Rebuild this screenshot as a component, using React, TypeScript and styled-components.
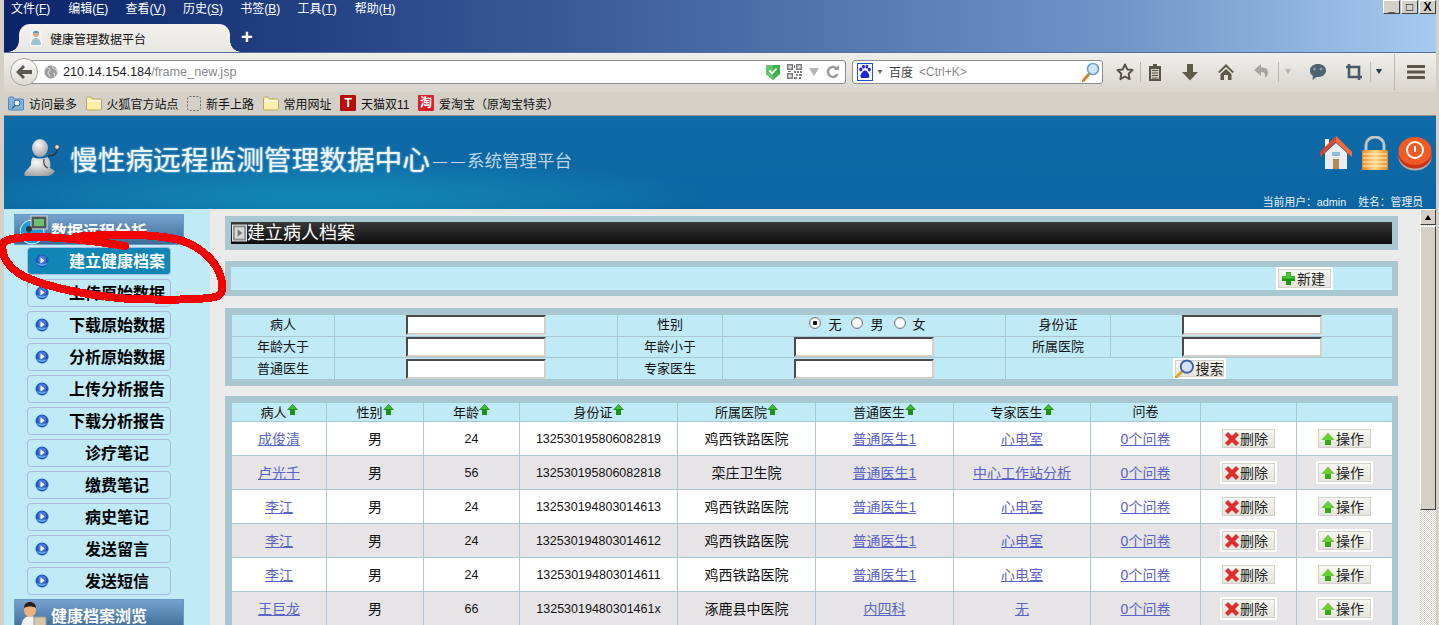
import React from "react";
import styled, { createGlobalStyle } from "styled-components";

const FONT = `"Liberation Sans", "Noto Sans CJK SC", sans-serif`;

const Global = createGlobalStyle`
  html, body { margin: 0; padding: 0; background: #d4d0c8; }
  * { box-sizing: border-box; }
  body { font-family: ${FONT}; }
`;

const Page = styled.div`
  position: relative;
  width: 1439px;
  height: 625px;
  overflow: hidden;
  background: #d4d0c8;
  padding: 0 3px 0 4px;
  display: flex;
  flex-direction: column;
  font-family: ${FONT};
`;

/* ---------- browser chrome ---------- */
const TitleBar = styled.div`
  height: 52px;
  flex: none;
  background: linear-gradient(90deg, #0a246a 0%, #3a5b98 40%, #7096c8 78%, #a6caf0 100%);
  display: flex;
  flex-direction: column;
`;
const MenuRow = styled.div`
  height: 24px;
  display: flex;
  padding-left: 7px;
`;
const MenuItem = styled.span`
  flex: 0 0 57.3px;
  color: #fff;
  font-size: 12px;
  line-height: 18px;
  u { text-underline-offset: 1px; }
`;
const WinButtons = styled.div`
  margin-left: auto;
  display: flex;
  gap: 1px;
  height: 14px;
`;
const WinButton = styled.span`
  width: 17px;
  height: 14px;
  background: #d4d0c8;
  border: 1px solid;
  border-color: #fff #404040 #404040 #fff;
  color: #000;
  font-size: 12px;
  font-weight: bold;
  line-height: 12px;
  text-align: center;
`;
const TabRow = styled.div`
  height: 28px;
  display: flex;
  align-items: stretch;
  padding-left: 15px;
`;
const Tab = styled.div`
  position: relative;
  width: 211px;
  background: linear-gradient(#f3f2ee, #e8e6e1);
  border-radius: 11px 11px 0 0;
  display: flex;
  align-items: center;
  padding-left: 11px;
  gap: 8px;
  font-size: 12px;
  color: #111;
  &::before, &::after {
    content: "";
    position: absolute;
    bottom: 0;
    width: 11px;
    height: 11px;
  }
  &::before {
    left: -11px;
    background: radial-gradient(circle at 0 0, transparent 10.5px, #e8e6e1 11px);
  }
  &::after {
    right: -11px;
    background: radial-gradient(circle at 100% 0, transparent 10.5px, #e8e6e1 11px);
  }
`;
const NewTab = styled.span`
  margin-left: 11px;
  color: #fff;
  font-size: 20px;
  font-weight: bold;
  line-height: 26px;
`;
const NavBar = styled.div`
  height: 40px;
  flex: none;
  border-top: 1px solid #5a6f96;
  background: linear-gradient(#f0efeb, #d8d5ce);
  display: flex;
  align-items: center;
  padding: 0 0 2px 6px;
`;
const BackButton = styled.div`
  width: 28px;
  height: 28px;
  flex: none;
  border-radius: 50%;
  border: 1px solid #a8a49c;
  background: linear-gradient(#fbfbf9, #dcdad4);
  display: flex;
  align-items: center;
  justify-content: center;
  position: relative;
  z-index: 1;
`;
const UrlBar = styled.div`
  width: 822px;
  height: 24px;
  margin-left: -14px;
  background: #fff;
  border: 1px solid #8e8e8e;
  border-radius: 0 3px 3px 0;
  display: flex;
  align-items: center;
  padding: 0 6px 0 19px;
  font-size: 12.7px;
  color: #222;
`;
const UrlText = styled.span`
  margin-left: 5px;
  span { color: #8a8a8a; }
`;
const UrlIcons = styled.div`
  margin-left: auto;
  display: flex;
  align-items: center;
  gap: 7px;
`;
const SearchBar = styled.div`
  width: 251px;
  height: 24px;
  margin-left: 6px;
  background: #fff;
  border: 1px solid #8e8e8e;
  border-radius: 3px;
  display: flex;
  align-items: center;
  padding: 0 2px 0 4px;
  font-size: 12px;
  color: #555;
`;
const SearchHint = styled.span`
  margin-left: 6px;
  display: flex;
  align-items: center;
  gap: 6px;
  color: #444;
  span { color: #888; }
`;
const SearchGlass = styled.span`
  margin-left: auto;
  display: flex;
`;
const ToolSlot = styled.span<{ $ml: number }>`
  margin-left: ${(p) => p.$ml}px;
  display: flex;
  align-items: center;
`;
const ToolSep = styled.span<{ $ml: number; $h: number }>`
  margin-left: ${(p) => p.$ml}px;
  width: 1px;
  height: ${(p) => p.$h}px;
  background: #bcb8b0;
`;
const BookmarkBar = styled.div`
  height: 24px;
  flex: none;
  display: flex;
  align-items: center;
  gap: 8.5px;
  padding: 0 0 1px 4px;
  border-bottom: 1px solid #8f8c86;
  background: #d4d0c8;
`;
const Bookmark = styled.span`
  display: flex;
  align-items: center;
  gap: 5px;
  font-size: 12px;
  color: #111;
`;
const BookBadge = styled.span<{ $bg: string }>`
  width: 16px;
  height: 16px;
  background: ${(p) => p.$bg};
  color: #fff;
  font-size: 12px;
  font-weight: bold;
  line-height: 16px;
  text-align: center;
  border-radius: 1px;
`;

/* ---------- site header ---------- */
const SiteHeader = styled.header`
  height: 93px;
  flex: none;
  display: flex;
  justify-content: space-between;
  background:
    radial-gradient(ellipse 390px 38px at 320px 80px, #1288b6 0%, rgba(18, 136, 182, 0.5) 60%, rgba(18, 136, 182, 0) 100%),
    linear-gradient(#0f6ca8, #0c65a2);
`;
const Brand = styled.div`
  display: flex;
  align-items: center;
  padding: 0 0 10px 20px;
`;
const BrandTitle = styled.h1`
  margin: 0 0 0 10px;
  font-size: 27.7px;
  font-weight: 400;
  color: #eef6fb;
  text-shadow: 0 0 2px #bfe2f2;
  white-space: nowrap;
`;
const BrandDash = styled.span`
  margin: 6px -2px 0 3px;
  font-size: 14px;
  letter-spacing: 4px;
  color: #bcd6e6;
  white-space: nowrap;
`;
const BrandSub = styled.span`
  font-size: 17.5px;
  color: #bcd6e6;
  margin-top: 4px;
  white-space: nowrap;
`;
const HeaderRight = styled.div`
  display: flex;
  flex-direction: column;
  align-items: flex-end;
  padding: 19px 4px 0 0;
`;
const HeaderIcons = styled.div`
  display: flex;
  align-items: center;
  gap: 9px;
`;
const UserLine = styled.div`
  margin-top: auto;
  margin-right: 9px;
  font-size: 10.8px;
  color: #e6f2fa;
  display: flex;
  gap: 12px;
`;

/* ---------- body ---------- */
const Body = styled.div`
  flex: 1;
  min-height: 0;
  display: flex;
`;
const Sidebar = styled.nav`
  width: 206px;
  flex: none;
  background: #c0eaf5;
  padding: 5px 0 0 10px;
  display: flex;
  flex-direction: column;
`;
const SectionHead = styled.div`
  width: 170px;
  height: 31px;
  flex: none;
  margin-bottom: 2px;
  border: 1px solid #6a98c8;
  background: linear-gradient(#76a2cf, #3d6b94);
  display: flex;
  align-items: center;
  padding-left: 5px;
  gap: 3px;
  color: #fff;
  font-size: 16px;
  font-weight: bold;
`;
const SideButton = styled.div<{ $active?: boolean }>`
  width: 144px;
  height: 28px;
  flex: none;
  margin: 0 0 4px 13px;
  border: 1px solid #aabbdd;
  border-radius: 4px;
  background: ${(p) => (p.$active ? "#0f86b5" : "#c0eaf5")};
  color: ${(p) => (p.$active ? "#fff" : "#000")};
  display: grid;
  grid-template-columns: 36px 1fr;
  align-items: center;
  font-size: 16px;
  line-height: 24px;
  font-weight: bold;
  text-align: center;
  svg { margin-left: 7px; }
  span { padding-top: 1px; }
`;
const Main = styled.main`
  flex: 1;
  min-width: 0;
  overflow: hidden;
  background: #ebebeb;
  padding: 7px 22px 0 15px;
  display: flex;
  flex-direction: column;
`;
const Panel = styled.section<{ $gap?: number }>`
  flex: none;
  background: #a9c7d0;
  padding: 6px;
  margin-bottom: ${(p) => p.$gap ?? 0}px;
`;
const PageTitle = styled.div`
  height: 22px;
  background: linear-gradient(#383838, #0e0e0e);
  color: #fff;
  display: flex;
  align-items: center;
  padding-left: 1px;
  font-size: 18px;
  line-height: 22px;
`;
const ToolRow = styled.div`
  height: 23px;
  background: #c0eaf5;
  display: flex;
  justify-content: flex-end;
  padding-right: 59px;
`;
const ActionButton = styled.button<{ $h?: number }>`
  font-family: ${FONT};
  height: ${(p) => p.$h ?? 23}px;
  width: ${(p) => (p.$h ? 53 : 57)}px;
  padding: 0 0 0 ${(p) => (p.$h ? 0 : 3)}px;
  display: inline-flex;
  align-items: center;
  vertical-align: middle;
  gap: 1px;
  background: linear-gradient(#f8f8f3, #e4e4dc);
  border: 2px solid #fff;
  box-shadow: inset 0 0 0 1px #d2d2ca;
  color: #222;
  font-size: 14px;
  line-height: 16px;
`;
const Grid = styled.table`
  width: 1161px;
  table-layout: fixed;
  border-collapse: collapse;
  font-size: 14px;
  color: #111;
`;
const ColW = styled.col<{ $w: number }>`
  width: ${(p) => p.$w}px;
`;
const FilterCell = styled.td`
  height: 21.6px;
  padding: 0;
  border: 1px solid #a9c7d0;
  background: #c0eaf5;
  font-size: 13px;
  line-height: 16px;
  text-align: center;
`;
const TextField = styled.input`
  display: block;
  width: 140px;
  height: 20px;
  margin: 0 auto;
  padding: 0;
  background: #fff;
  border: 2px solid;
  border-color: #4a4a4a #d4d0c8 #d4d0c8 #4a4a4a;
`;
const ButtonCell = styled.div`
  display: flex;
  justify-content: center;
`;
const RadioGroup = styled.div`
  display: flex;
  justify-content: center;
  align-items: center;
  padding-left: 17px;
`;
const RadioLabel = styled.label`
  display: flex;
  align-items: center;
  gap: 7px;
  margin-right: 10px;
  font-size: 13px;
`;
const Radio = styled.input`
  appearance: none;
  width: 12px;
  height: 12px;
  margin: 0 0 4px;
  border-radius: 50%;
  background: #fff;
  border: 1px solid #777;
  box-shadow: inset 0 0 0 1px #ddd;
  &:checked { background: radial-gradient(circle, #111 0 2px, #fff 2.5px); }
`;
const HeadCell = styled.th`
  height: 19px;
  padding: 0;
  border: 1px solid #a9c7d0;
  background: #c0eaf5;
  font-size: 13px;
  line-height: 14px;
  font-weight: 400;
  white-space: nowrap;
  svg { vertical-align: 2px; }
`;
const Row = styled.tr<{ $alt: boolean }>`
  background: ${(p) => (p.$alt ? "#e6e4e6" : "#fff")};
`;
const Cell = styled.td<{ $small?: boolean }>`
  height: 34px;
  padding: 0;
  border: 1px solid #a9c7d0;
  text-align: center;
  font-size: ${(p) => (p.$small ? "12.5px" : "14px")};
  line-height: 20px;
  white-space: nowrap;
`;
const TableLink = styled.a`
  color: #5b63c4;
  text-decoration: underline;
`;
const Scrollbar = styled.div`
  width: 16px;
  flex: none;
  display: flex;
  flex-direction: column;
  background: repeating-conic-gradient(#d4d0c8 0 25%, #fff 0 50%) 0 0 / 2px 2px;
`;
const ScrollUp = styled.div`
  height: 16px;
  flex: none;
  background: #d4d0c8;
  border: 1px solid;
  border-color: #fff #404040 #404040 #fff;
  display: flex;
  align-items: center;
  justify-content: center;
`;
const ScrollThumb = styled.div`
  height: 284px;
  margin-top: 1px;
  flex: none;
  background: #d4d0c8;
  border: 1px solid;
  border-color: #fff #404040 #404040 #fff;
`;
const Scribble = styled.svg`
  position: absolute;
  left: 0;
  top: 225px;
  pointer-events: none;
`;

/* ---------- drawings ---------- */
const Globe = () => (
  <svg width="14" height="14" viewBox="0 0 14 14">
    <circle cx="7" cy="7" r="6.5" fill="#9c9c9c" />
    <path d="M3 3c2 0 3 1 3 2s-2 1-2 3 2 1 2 4M9 1c-1 2 0 3 2 3s1 2 2 3M9 8c2 0 2 2 1 4" stroke="#d6d6d6" fill="none" strokeWidth="1.2" />
  </svg>
);
const Shield = () => (
  <svg width="14" height="16" viewBox="0 0 14 16">
    <path d="M0 1h14v9l-7 6-7-6z" fill="#3fb24c" />
    <path d="M0 1h7v15l-7-6z" fill="#62c46a" />
    <path d="M3.5 6.5l2.5 3 4.5-5" stroke="#fff" strokeWidth="1.8" fill="none" />
  </svg>
);
const Qr = () => (
  <svg width="15" height="15" viewBox="0 0 15 15" fill="#7b7b7b">
    <path fillRule="evenodd" d="M0 0h6v6H0zM1.5 1.5v3h3v-3zM9 0h6v6H9zM10.500 1.500v3h3v-3zM0 9h6v6H0zM1.500 10.500v3h3v-3z" />
    <path d="M2.500 2.500h1v1h-1zM11.500 2.500h1v1h-1zM2.500 11.500h1v1h-1zM7 1h1v3H7zM7 7h2v2H7zM10 7h2v2h-2zM13 7h2v2h-2zM1 7h3v1H1zM9 10h2v2H9zM12 10h3v2h-3zM7 13h3v2H7zM12 13h2v2h-2z" />
  </svg>
);
const Tri = ({ w = 10, h = 8, c = "#b4b4b4", down = true }: { w?: number; h?: number; c?: string; down?: boolean }) => (
  <svg width={w} height={h} viewBox="0 0 10 8">
    <path d={down ? "M0 0h10L5 8z" : "M0 8h10L5 0z"} fill={c} />
  </svg>
);
const Reload = () => (
  <svg width="13" height="15" viewBox="0 0 13 15">
    <path d="M11 5A5 5 0 1 0 11.500 10" fill="none" stroke="#9a9a9a" strokeWidth="2.400" />
    <path d="M8 6h5V1z" fill="#9a9a9a" />
  </svg>
);
const BaiduIcon = () => (
  <svg width="16" height="18" viewBox="0 0 16 18">
    <rect x=".5" y=".5" width="15" height="17" fill="#fff" stroke="#1a56c4" />
    <g fill="#2222dd">
      <ellipse cx="3.800" cy="6.500" rx="1.500" ry="2" />
      <ellipse cx="6.500" cy="3.800" rx="1.400" ry="2" />
      <ellipse cx="9.800" cy="3.800" rx="1.400" ry="2" />
      <ellipse cx="12.300" cy="6.500" rx="1.500" ry="2" />
      <path d="M8 7.500c2 0 2.500 2 3.800 3.500 1.300 2 .5 4-1.500 4H5.500c-2 0-2.800-2-1.500-4C5.300 9.500 6 7.500 8 7.500z" />
    </g>
  </svg>
);
const Glass = () => (
  <svg width="18" height="20" viewBox="0 0 18 20">
    <path d="M1 19l6-7" stroke="#c98a3a" strokeWidth="3" strokeLinecap="round" />
    <circle cx="11" cy="7" r="5.500" fill="#cfe8f8" stroke="#6f9ec6" strokeWidth="1.600" />
  </svg>
);
const Star = () => (
  <svg width="18" height="18" viewBox="0 0 18 18">
    <path d="M9 1.500l2.300 4.900 5.200.7-3.800 3.700.9 5.300L9 13.500l-4.600 2.600.9-5.300L1.500 7.100l5.200-.7z" fill="none" stroke="#57524a" strokeWidth="2" strokeLinejoin="round" />
  </svg>
);
const Clip = () => (
  <svg width="18" height="18" viewBox="0 0 18 18">
    <path d="M3 3h4V1h4v2h4v15H3z" fill="#59554a" />
    <path d="M5 6h8v10H5z" fill="#cfccc4" />
    <path d="M6 7.500h6M6 10h6M6 12.500h6M6 15h6" stroke="#59554a" strokeWidth="1.200" />
  </svg>
);
const Down = () => (
  <svg width="18" height="18" viewBox="0 0 18 18">
    <path d="M6 1h6v8h5l-8 8.500L1 9h5z" fill="#5d5a4c" />
  </svg>
);
const HomeTool = () => (
  <svg width="18" height="18" viewBox="0 0 18 18">
    <path d="M9 1L1 9l1.500 1L9 4l6.500 6L17 9z" fill="#5d5a4c" />
    <path d="M3.500 11L9 6l5.500 5v6H11v-5H7v5H3.500z" fill="#5d5a4c" />
  </svg>
);
const Undo = () => (
  <svg width="18" height="18" viewBox="0 0 18 18">
    <path d="M8 1L1 7l7 6V9c3 0 4.500 1.500 4 6 3-2.500 4-5.500 2.500-8C13.500 5 11 4.500 8 4.500z" fill="#a8a6a0" />
  </svg>
);
const Chat = () => (
  <svg width="18" height="18" viewBox="0 0 18 18">
    <path d="M9 1c4.500 0 8 2.500 8 6.500S13.500 14 9 14c-.7 0-1 0-1.500-.1L3.500 17l.5-4C2 12 1 10 1 7.500 1 3.500 4.500 1 9 1z" fill="#4e6272" />
    <circle cx="5.500" cy="6" r="1.500" fill="#8b9aa6" />
    <circle cx="12" cy="6" r="1.500" fill="#8b9aa6" />
  </svg>
);
const Crop = () => (
  <svg width="18" height="18" viewBox="0 0 18 18">
    <path d="M4 1v13h13M1 4h13v13" fill="none" stroke="#4a5a68" strokeWidth="2.600" />
  </svg>
);
const Burger = () => (
  <svg width="18" height="14" viewBox="0 0 18 14">
    <path d="M1 0h16a1 1 0 0 1 0 3H1a1 1 0 0 1 0-3zM1 5.500h16a1 1 0 0 1 0 3H1a1 1 0 0 1 0-3zM1 11h16a1 1 0 0 1 0 3H1a1 1 0 0 1 0-3z" fill="#59554a" />
  </svg>
);
const Favicon = () => (
  <svg width="12" height="16" viewBox="0 0 12 16">
    <rect width="12" height="16" fill="#f4f4f4" />
    <circle cx="6" cy="4" r="3" fill="#d9a98c" />
    <path d="M3 3c0-3 6-3 6 0z" fill="#5a9ab8" />
    <path d="M1 15c0-5 3-7 5-7s5 2 5 7z" fill="#9cc4d8" />
  </svg>
);
const FolderIcon = () => (
  <svg width="16" height="15" viewBox="0 0 16 15">
    <path d="M.5 2.500c0-1 .5-1.500 1.500-1.500h3l1.500 2h8c.6 0 1 .4 1 1v9c0 .6-.4 1-1 1h-13c-.6 0-1-.4-1-1z" fill="#fbeea6" stroke="#b9a560" />
    <path d="M1 5h14" stroke="#fff" />
  </svg>
);
const MostIcon = () => (
  <svg width="16" height="15" viewBox="0 0 16 15">
    <path d="M.5 2.500c0-1 .5-1.500 1.500-1.500h3l1.500 2h8c.6 0 1 .4 1 1v9c0 .6-.4 1-1 1h-13c-.6 0-1-.4-1-1z" fill="#7fb3dc" stroke="#4f86b6" />
    <circle cx="9" cy="7" r="3" fill="#e4f2fb" stroke="#2f6a9c" />
    <path d="M7 9.500l-3 3" stroke="#2f6a9c" strokeWidth="1.600" />
  </svg>
);
const DashedIcon = () => (
  <svg width="14" height="15" viewBox="0 0 14 15">
    <rect x=".5" y=".5" width="13" height="14" rx="2" fill="none" stroke="#6a6a64" strokeDasharray="2 1.500" />
  </svg>
);
const PersonLogo = () => (
  <svg width="36" height="40" viewBox="0 0 36 40">
    <defs>
      <radialGradient id="pg" cx="40%" cy="30%" r="80%">
        <stop offset="0" stopColor="#fafafa" />
        <stop offset="1" stopColor="#9a9a9a" />
      </radialGradient>
    </defs>
    <ellipse cx="16" cy="10" rx="8" ry="9" fill="url(#pg)" />
    <path d="M9 19c4 2 10 2 14 0 3 2 4 6 3 11l5 3c-2 3-5 5-8 5H2c-2 0-2-2-1-4 2-3 5-5 6-7 0-3 0-6 2-8z" fill="url(#pg)" />
    <path d="M24 18c6 0 9-3 9-7" stroke="#333" strokeWidth="1.500" fill="none" />
    <circle cx="33" cy="9" r="2.400" fill="#ddd" stroke="#444" />
    <path d="M20 21c-1 5 1 8 4 9" stroke="#444" strokeWidth="1.200" fill="none" />
  </svg>
);
const HomeBig = () => (
  <svg width="32" height="36" viewBox="0 0 32 36">
    <path d="M5 18L16 8l11 10v16H5z" fill="#eceff1" />
    <path d="M5 4h4v9H5z" fill="#f1f1f1" />
    <path d="M16 1L0 17v5L16 7l16 15v-5z" fill="#d9482a" />
    <path d="M16 1l16 16v5L16 7z" fill="#f06a3a" />
    <path d="M12 17h8v4h-8z" fill="#8ebde0" />
    <path d="M13 24h6v10h-6z" fill="#b08a5c" />
  </svg>
);
const LockBig = () => (
  <svg width="28" height="35" viewBox="0 0 28 35">
    <defs>
      <linearGradient id="lk" x1="0" x2="1">
        <stop offset="0" stopColor="#e88a28" />
        <stop offset=".5" stopColor="#ffd887" />
        <stop offset="1" stopColor="#e88a28" />
      </linearGradient>
    </defs>
    <path d="M5 15V9a9 8 0 0 1 18 0v6" fill="none" stroke="#bfc4c6" strokeWidth="3" />
    <rect x="1" y="14" width="26" height="20" rx="1.500" fill="url(#lk)" />
    <path d="M2 18h24M2 22h24M2 26h24M2 30h24" stroke="#fff0c8" strokeWidth="1.200" />
  </svg>
);
const PowerBig = () => (
  <svg width="34" height="35" viewBox="0 0 34 35">
    <ellipse cx="17" cy="21" rx="16.500" ry="13.500" fill="#b9aaa4" />
    <ellipse cx="17" cy="19" rx="16.500" ry="13.500" fill="#c8341a" />
    <ellipse cx="17" cy="15" rx="16.500" ry="14" fill="#f25a22" />
    <circle cx="17" cy="14" r="8" fill="none" stroke="#fff" strokeWidth="2" />
    <path d="M17 10v6" stroke="#fff" strokeWidth="2" />
  </svg>
);
const PlayDot = () => (
  <svg width="14" height="14" viewBox="0 0 14 14">
    <circle cx="7" cy="7" r="6.500" fill="#2154b8" />
    <path d="M1 9c2 4 10 4 12 0-2 1-10 1-12 0z" fill="#5ea2ec" />
    <circle cx="7" cy="5.500" r="4" fill="#4a7ad0" />
    <path d="M5.500 3.500l4 3-4 3z" fill="#fff" />
  </svg>
);
const SectionIconA = () => (
  <svg width="28" height="30" viewBox="0 0 28 30">
    <circle cx="12" cy="17" r="12" fill="#1f9ad8" stroke="#e6f6fc" />
    <path d="M3 18c5 6 14 6 18 0" stroke="#8fdcf5" strokeWidth="2" fill="none" />
    <rect x="11" y="1" width="16" height="13" fill="#50585c" stroke="#d8dcdc" />
    <path d="M14 4h10v7H14z" fill="#6ec070" />
    <circle cx="9" cy="14" r="3" fill="#333" />
    <path d="M9 17v6h8" stroke="#333" strokeWidth="1.600" fill="none" />
  </svg>
);
const SectionIconB = () => (
  <svg width="28" height="28" viewBox="0 0 28 28" style={{ alignSelf: "flex-end" }}>
    <path d="M1 28c0-9 4-13 9-13s9 4 9 13z" fill="#f2f2f2" />
    <ellipse cx="10" cy="9" rx="6" ry="7" fill="#f0b080" />
    <path d="M4 7c0-8 12-8 12 0-3-2-9-2-12 0z" fill="#2a2020" />
    <rect x="14" y="16" width="12" height="12" fill="#d8c8a8" stroke="#999" />
  </svg>
);
const SmallTitleIcon = () => (
  <svg width="15" height="18" viewBox="0 0 16 18">
    <rect x=".5" y=".5" width="15" height="17" fill="#8f8f8f" stroke="#ececec" />
    <rect x="3" y="3" width="10" height="12" fill="#d8d8d8" />
    <path d="M6 5l5 4-5 4z" fill="#777" />
  </svg>
);
const Plus = () => (
  <svg width="15" height="15" viewBox="0 0 15 15">
    <path d="M5 1h5v4h4v5h-4v4H5v-4H1V5h4z" fill="#1d9a12" />
    <path d="M5.500 1.500h4v4h-4z M1.500 5.500h12v2h-12z" fill="#52c43e" />
  </svg>
);
const SearchPic = () => (
  <svg width="20" height="19" viewBox="0 0 20 20">
    <path d="M1 19l6-6" stroke="#d8a52c" strokeWidth="3" strokeLinecap="round" />
    <circle cx="12" cy="8" r="6.500" fill="#cfe2f8" stroke="#3f62a8" strokeWidth="2" />
  </svg>
);
const Cross = () => (
  <svg width="14" height="14" viewBox="0 0 14 14">
    <path d="M3 0l4 4 4-4 3 3-4 4 4 4-3 3-4-4-4 4-3-3 4-4-4-4z" fill="#e02c2c" />
  </svg>
);
const UpArrow = () => (
  <svg width="14" height="14" viewBox="0 0 14 14">
    <path d="M7 1l6.500 7H10v5H4V8H.5z" fill="#3aa818" />
    <path d="M7 1l6.500 7H.5z" fill="#6ccf3a" />
  </svg>
);
const SortArrow = () => (
  <svg width="11" height="11" viewBox="0 0 11 11">
    <path d="M5.500 0L11 6H8v5H3V6H0z" fill="#1d8f12" />
    <path d="M5.500 1L9 5H2z" fill="#47bf35" />
  </svg>
);

/* ---------- data ---------- */
const menus: [string, string][] = [
  ["文件", "F"], ["编辑", "E"], ["查看", "V"], ["历史", "S"], ["书签", "B"], ["工具", "T"], ["帮助", "H"],
];
const sideItems = [
  "建立健康档案", "上传原始数据", "下载原始数据", "分析原始数据", "上传分析报告", "下载分析报告",
  "诊疗笔记", "缴费笔记", "病史笔记", "发送留言", "发送短信",
];
const headCols = [
  { t: "病人", s: true }, { t: "性别", s: true }, { t: "年龄", s: true }, { t: "身份证", s: true },
  { t: "所属医院", s: true }, { t: "普通医生", s: true }, { t: "专家医生", s: true }, { t: "问卷", s: false },
  { t: "", s: false }, { t: "", s: false },
];
const colWidths = [95, 97, 96, 158, 138, 138, 137, 110, 96, 96];
const filterWidths = [103, 283, 105, 283, 105, 282];
const rows = [
  ["成俊清", "男", "24", "132530195806082819", "鸡西铁路医院", "普通医生1", "心电室"],
  ["卢光千", "男", "56", "132530195806082818", "栾庄卫生院", "普通医生1", "中心工作站分析"],
  ["李江", "男", "24", "132530194803014613", "鸡西铁路医院", "普通医生1", "心电室"],
  ["李江", "男", "24", "132530194803014612", "鸡西铁路医院", "普通医生1", "心电室"],
  ["李江", "男", "24", "132530194803014611", "鸡西铁路医院", "普通医生1", "心电室"],
  ["王巨龙", "男", "66", "13253019480301461x", "涿鹿县中医院", "内四科", "无"],
];

export default function App() {
  return (
    <Page>
      <Global />
      <TitleBar>
        <MenuRow>
          {menus.map(([t, k]) => (
            <MenuItem key={k}>
              {t}(<u>{k}</u>)
            </MenuItem>
          ))}
          <WinButtons>
            <WinButton>_</WinButton>
            <WinButton>□</WinButton>
            <WinButton>X</WinButton>
          </WinButtons>
        </MenuRow>
        <TabRow>
          <Tab>
            <Favicon />
            健康管理数据平台
          </Tab>
          <NewTab>+</NewTab>
        </TabRow>
      </TitleBar>

      <NavBar>
        <BackButton>
          <svg width="16" height="14" viewBox="0 0 16 14">
            <path d="M7 0l2 2-3 3h10v4H6l3 3-2 2-7-7z" fill="#5a5a52" />
          </svg>
        </BackButton>
        <UrlBar>
          <Globe />
          <UrlText>
            210.14.154.184<span>/frame_new.jsp</span>
          </UrlText>
          <UrlIcons>
            <Shield />
            <Qr />
            <Tri />
            <Reload />
          </UrlIcons>
        </UrlBar>
        <SearchBar>
          <BaiduIcon />
          <ToolSlot $ml={4}>
            <Tri w={6} h={4} c="#666" />
          </ToolSlot>
          <SearchHint>
            百度 <span>&lt;Ctrl+K&gt;</span>
          </SearchHint>
          <SearchGlass>
            <Glass />
          </SearchGlass>
        </SearchBar>
        <ToolSlot $ml={13}><Star /></ToolSlot>
        <ToolSep $ml={6} $h={20} />
        <ToolSlot $ml={5}><Clip /></ToolSlot>
        <ToolSlot $ml={17}><Down /></ToolSlot>
        <ToolSlot $ml={18}><HomeTool /></ToolSlot>
        <ToolSlot $ml={18}><Undo /></ToolSlot>
        <ToolSep $ml={7} $h={20} />
        <ToolSlot $ml={5}><Tri w={8} h={5} /></ToolSlot>
        <ToolSlot $ml={17}><Chat /></ToolSlot>
        <ToolSlot $ml={18}><Crop /></ToolSlot>
        <ToolSep $ml={7} $h={20} />
        <ToolSlot $ml={4}><Tri w={8} h={5} c="#2a3a4a" /></ToolSlot>
        <ToolSep $ml={11} $h={36} />
        <ToolSlot $ml={12}><Burger /></ToolSlot>
      </NavBar>

      <BookmarkBar>
        <Bookmark><MostIcon />访问最多</Bookmark>
        <Bookmark><FolderIcon />火狐官方站点</Bookmark>
        <Bookmark><DashedIcon />新手上路</Bookmark>
        <Bookmark><FolderIcon />常用网址</Bookmark>
        <Bookmark><BookBadge $bg="#b80c0c">T</BookBadge>天猫双11</Bookmark>
        <Bookmark><BookBadge $bg="#d8222c">淘</BookBadge>爱淘宝（原淘宝特卖）</Bookmark>
      </BookmarkBar>

      <SiteHeader>
        <Brand>
          <PersonLogo />
          <BrandTitle>慢性病远程监测管理数据中心</BrandTitle>
          <BrandDash>——</BrandDash>
          <BrandSub>系统管理平台</BrandSub>
        </Brand>
        <HeaderRight>
          <HeaderIcons>
            <HomeBig />
            <LockBig />
            <PowerBig />
          </HeaderIcons>
          <UserLine>
            <span>当前用户：admin</span>
            <span>姓名：管理员</span>
          </UserLine>
        </HeaderRight>
      </SiteHeader>

      <Body>
        <Sidebar>
          <SectionHead>
            <SectionIconA />
            数据远程分析
          </SectionHead>
          {sideItems.map((t, i) => (
            <SideButton key={t} $active={i === 0}>
              <PlayDot />
              <span>{t}</span>
            </SideButton>
          ))}
          <SectionHead>
            <SectionIconB />
            健康档案浏览
          </SectionHead>
        </Sidebar>

        <Main>
          <Panel $gap={11}>
            <PageTitle>
              <SmallTitleIcon />
              建立病人档案
            </PageTitle>
          </Panel>
          <Panel $gap={12}>
            <ToolRow>
              <ActionButton>
                <Plus />
                新建
              </ActionButton>
            </ToolRow>
          </Panel>
          <Panel $gap={10}>
            <Grid>
              <colgroup>
                {filterWidths.map((w, i) => <ColW key={i} $w={w} />)}
              </colgroup>
              <tbody>
                <tr>
                  <FilterCell>病人</FilterCell>
                  <FilterCell><TextField /></FilterCell>
                  <FilterCell>性别</FilterCell>
                  <FilterCell>
                    <RadioGroup>
                      <RadioLabel><Radio type="radio" name="sex" defaultChecked />无</RadioLabel>
                      <RadioLabel><Radio type="radio" name="sex" />男</RadioLabel>
                      <RadioLabel><Radio type="radio" name="sex" />女</RadioLabel>
                    </RadioGroup>
                  </FilterCell>
                  <FilterCell>身份证</FilterCell>
                  <FilterCell><TextField /></FilterCell>
                </tr>
                <tr>
                  <FilterCell>年龄大于</FilterCell>
                  <FilterCell><TextField /></FilterCell>
                  <FilterCell>年龄小于</FilterCell>
                  <FilterCell><TextField /></FilterCell>
                  <FilterCell>所属医院</FilterCell>
                  <FilterCell><TextField /></FilterCell>
                </tr>
                <tr>
                  <FilterCell>普通医生</FilterCell>
                  <FilterCell><TextField /></FilterCell>
                  <FilterCell>专家医生</FilterCell>
                  <FilterCell><TextField /></FilterCell>
                  <FilterCell colSpan={2}>
                    <ButtonCell>
                      <ActionButton $h={21}>
                        <SearchPic />
                        搜索
                      </ActionButton>
                    </ButtonCell>
                  </FilterCell>
                </tr>
              </tbody>
            </Grid>
          </Panel>
          <Panel>
            <Grid>
              <colgroup>
                {colWidths.map((w, i) => <ColW key={i} $w={w} />)}
              </colgroup>
              <thead>
                <tr>
                  {headCols.map((c, i) => (
                    <HeadCell key={i}>
                      {c.t}
                      {c.s && <SortArrow />}
                    </HeadCell>
                  ))}
                </tr>
              </thead>
              <tbody>
                {rows.map((r, i) => (
                  <Row key={i} $alt={i % 2 === 1}>
                    <Cell><TableLink>{r[0]}</TableLink></Cell>
                    <Cell>{r[1]}</Cell>
                    <Cell $small>{r[2]}</Cell>
                    <Cell $small>{r[3]}</Cell>
                    <Cell>{r[4]}</Cell>
                    <Cell><TableLink>{r[5]}</TableLink></Cell>
                    <Cell><TableLink>{r[6]}</TableLink></Cell>
                    <Cell><TableLink>0个问卷</TableLink></Cell>
                    <Cell>
                      <ActionButton><Cross />删除</ActionButton>
                    </Cell>
                    <Cell>
                      <ActionButton><UpArrow />操作</ActionButton>
                    </Cell>
                  </Row>
                ))}
              </tbody>
            </Grid>
          </Panel>
        </Main>

        <Scrollbar>
          <ScrollUp>
            <Tri w={8} h={5} c="#000" down={false} />
          </ScrollUp>
          <ScrollThumb />
        </Scrollbar>
      </Body>

      <Scribble width="240" height="90" viewBox="0 225 240 90" shapeRendering="crispEdges">
        <path
          d="M125 246C105 243 80 238 40 237C22 237 8 238 3 243C0 255 8 268 25 277C50 288 90 296 130 299C165 300 200 300 215 297C224 295 224 285 219 272C212 257 198 246 180 240C150 233 110 234 75 237"
          fill="none"
          stroke="#f50000"
          strokeWidth="8"
          strokeLinecap="round"
        />
      </Scribble>
    </Page>
  );
}
